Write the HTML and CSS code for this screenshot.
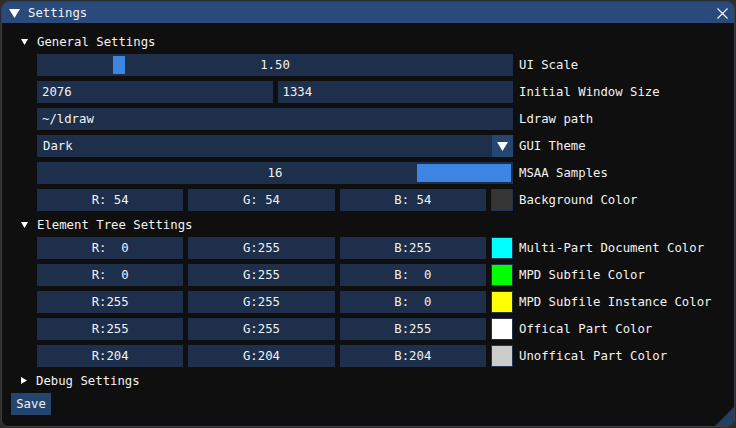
FILE: index.html
```html
<!DOCTYPE html>
<html>
<head>
<meta charset="utf-8">
<link rel="stylesheet" href="styles.css">
</head>
<body>
<div class="window">
  <div class="titlebar">
    <svg class="title-arrow" width="11" height="9" viewBox="0 0 11 9"><polygon points="0,0 11,0 5.5,9" fill="#fff"/></svg>
    <span class="title-text">Settings</span>
    <svg class="close" width="11" height="11" viewBox="0 0 11 11"><path d="M0.5 0.5 L10.5 10.5 M10.5 0.5 L0.5 10.5" stroke="#fff" stroke-width="1.1" fill="none"/></svg>
  </div>
  <div class="content">
    <div class="tree-header">
      <svg class="tree-arrow" width="7" height="6" viewBox="0 0 7 6"><polygon points="0,0 7,0 3.5,6" fill="#fff"/></svg>
      <span>General Settings</span>
    </div>
    <div class="group">
      <div class="row">
        <div class="frame slider"><div class="grab" style="left:76px;width:12px"></div><span class="val">1.50</span></div>
        <span class="label">UI Scale</span>
      </div>
      <div class="row">
        <div class="split">
          <div class="frame input">2076</div>
          <div class="frame input">1334</div>
        </div>
        <span class="label">Initial Window Size</span>
      </div>
      <div class="row">
        <div class="frame input wide">~/ldraw</div>
        <span class="label">Ldraw path</span>
      </div>
      <div class="row">
        <div class="combo">
          <div class="frame combo-text">Dark</div>
          <div class="combo-btn"><svg width="11" height="9" viewBox="0 0 11 9"><polygon points="0,0 11,0 5.5,9" fill="#fff"/></svg></div>
        </div>
        <span class="label">GUI Theme</span>
      </div>
      <div class="row">
        <div class="frame slider"><div class="grab" style="left:380px;width:94px"></div><span class="val">16</span></div>
        <span class="label">MSAA Samples</span>
      </div>
      <div class="row">
        <div class="colors">
          <div class="frame num">R: 54</div>
          <div class="frame num">G: 54</div>
          <div class="frame num">B: 54</div>
          <div class="swatch sw-bg"></div>
        </div>
        <span class="label">Background Color</span>
      </div>
    </div>

    <div class="tree-header">
      <svg class="tree-arrow" width="7" height="6" viewBox="0 0 7 6"><polygon points="0,0 7,0 3.5,6" fill="#fff"/></svg>
      <span>Element Tree Settings</span>
    </div>
    <div class="group">
      <div class="row">
        <div class="colors">
          <div class="frame num">R:  0</div>
          <div class="frame num">G:255</div>
          <div class="frame num">B:255</div>
          <div class="swatch sw-cyan"></div>
        </div>
        <span class="label">Multi-Part Document Color</span>
      </div>
      <div class="row">
        <div class="colors">
          <div class="frame num">R:  0</div>
          <div class="frame num">G:255</div>
          <div class="frame num">B:  0</div>
          <div class="swatch sw-green"></div>
        </div>
        <span class="label">MPD Subfile Color</span>
      </div>
      <div class="row">
        <div class="colors">
          <div class="frame num">R:255</div>
          <div class="frame num">G:255</div>
          <div class="frame num">B:  0</div>
          <div class="swatch sw-yellow"></div>
        </div>
        <span class="label">MPD Subfile Instance Color</span>
      </div>
      <div class="row">
        <div class="colors">
          <div class="frame num">R:255</div>
          <div class="frame num">G:255</div>
          <div class="frame num">B:255</div>
          <div class="swatch sw-white"></div>
        </div>
        <span class="label">Offical Part Color</span>
      </div>
      <div class="row">
        <div class="colors">
          <div class="frame num">R:204</div>
          <div class="frame num">G:204</div>
          <div class="frame num">B:204</div>
          <div class="swatch sw-grey"></div>
        </div>
        <span class="label">Unoffical Part Color</span>
      </div>
    </div>

    <div class="tree-header">
      <svg class="tree-arrow" width="6" height="7" viewBox="0 0 6 7"><polygon points="0,0 6,3.5 0,7" fill="#fff"/></svg>
      <span>Debug Settings</span>
    </div>
    <div class="save">Save</div>
  </div>
  <div class="grip"></div>
</div>
</body>
</html>
```

FILE: styles.css
```css
html, body {
  margin: 0;
  padding: 0;
}
body {
  background: #2c2c2c;
  font-family: "DejaVu Sans Mono", "Liberation Mono", monospace;
  font-size: 12.3px;
  color: #f2f2f2;
  overflow: hidden;
}
.window {
  margin: 1px;
  width: 732px;
  height: 424px;
  border: 1px solid #3d3d46;
  border-radius: 7px;
  background: #0f0f0f;
  overflow: hidden;
  position: relative;
  display: flex;
  flex-direction: column;
}
.titlebar {
  height: 21px;
  background: #294a7a;
  display: flex;
  align-items: center;
  padding-left: 7px;
  padding-right: 6px;
  flex-shrink: 0;
}
.title-arrow {
  display: block;
  margin-top: 1px;
}
.title-text {
  margin-left: 8px;
  flex: 1;
  line-height: 21px;
  padding-top: 1px;
}
.close {
  display: block;
  margin-top: 1px;
}
.content {
  padding: 10px 0 0 9px;
  display: flex;
  flex-direction: column;
}
.tree-header {
  height: 17px;
  display: flex;
  align-items: center;
  padding-left: 10px;
}
.tree-header span {
  margin-left: 9px;
}
.tree-arrow {
  display: block;
}
.group {
  margin-top: 4px;
  margin-bottom: 5px;
  padding-left: 26px;
  display: flex;
  flex-direction: column;
  gap: 5px;
}
.row {
  height: 22px;
  display: flex;
  align-items: center;
}
.label {
  margin-left: 6px;
  white-space: pre;
}
.frame {
  background: #1d2f4a;
  height: 22px;
  line-height: 22px;
  white-space: pre;
  box-sizing: border-box;
}
.slider {
  width: 476px;
  position: relative;
  text-align: center;
}
.slider .val {
  position: relative;
}
.grab {
  position: absolute;
  top: 2px;
  bottom: 2px;
  background: #3d85e0;
}
.split {
  width: 476px;
  display: flex;
  gap: 5px;
}
.split .frame {
  flex: 1;
}
.input {
  padding-left: 5px;
}
.wide {
  width: 476px;
}
.combo {
  width: 476px;
  display: flex;
}
.combo-text {
  flex: 1;
  padding-left: 6px;
}
.combo-btn {
  width: 21px;
  height: 22px;
  background: #24466f;
  display: flex;
  align-items: center;
  justify-content: center;
}
.combo-btn svg {
  display: block;
}
.colors {
  width: 476px;
  display: flex;
  gap: 5px;
}
.num {
  flex: 1;
  text-align: center;
}
.swatch {
  width: 22px;
  height: 22px;
  box-sizing: border-box;
  border: 1px solid #1f3250;
  flex-shrink: 0;
}
.sw-bg { background: #363636; }
.sw-cyan { background: #00ffff; }
.sw-green { background: #00ff00; }
.sw-yellow { background: #ffff00; }
.sw-white { background: #ffffff; }
.sw-grey { background: #cccccc; }
.save {
  margin-top: 4px;
  width: 40px;
  height: 22px;
  line-height: 22px;
  text-align: center;
  background: #24456d;
}
.grip {
  position: absolute;
  right: 0;
  bottom: 0;
  width: 19px;
  height: 19px;
  background: #23405f;
  clip-path: polygon(100% 0, 100% 100%, 0 100%);
}
```
